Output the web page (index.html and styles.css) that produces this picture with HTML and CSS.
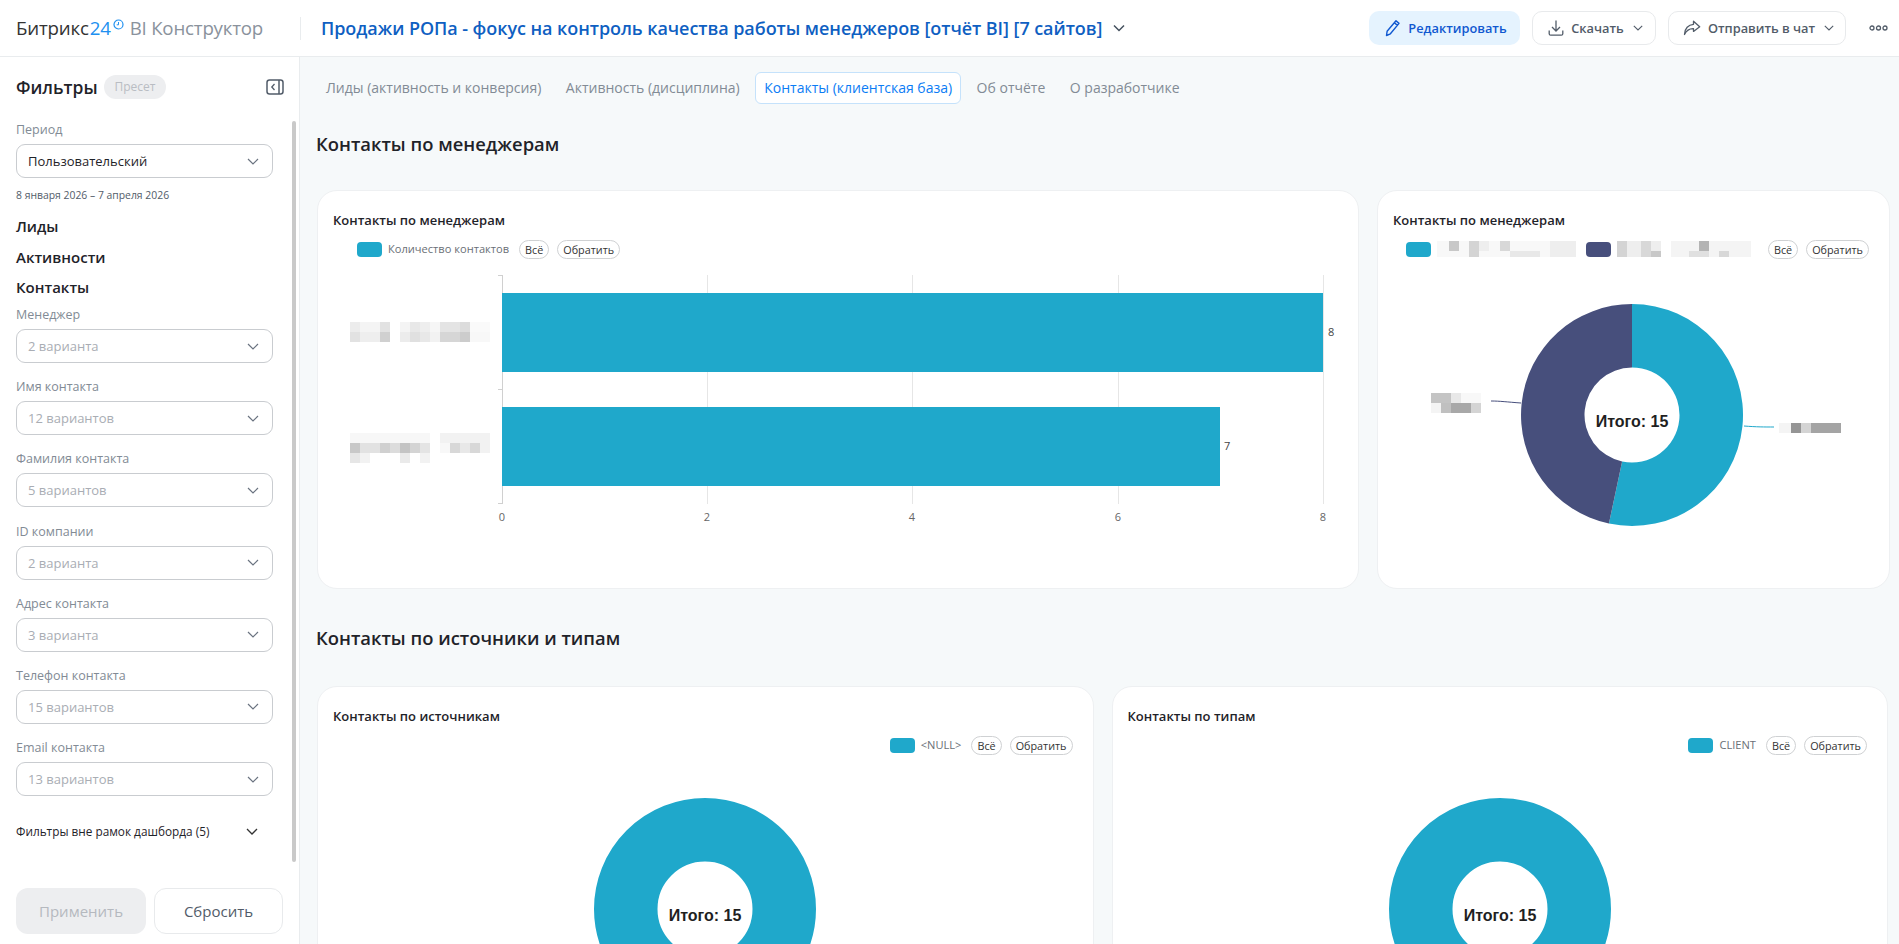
FILE: index.html
```html
<!DOCTYPE html>
<html lang="ru">
<head>
<meta charset="utf-8">
<title>Продажи РОПа</title>
<link rel="stylesheet" href="styles.css">
</head>
<body>
<div class="app">
  <header class="topbar">
    <div class="logo"><span class="logo-dark">Битрикс</span><span class="logo-blue">24</span><svg class="logo-clock" width="11" height="11" viewBox="0 0 11 11"><circle cx="5.500" cy="5.500" r="4.500" fill="none" stroke="#2090f0" stroke-width="1.200"/><path d="M5.500 3v2.800H3.700" fill="none" stroke="#2090f0" stroke-width="1"/></svg><span class="logo-gray">BI Конструктор</span></div>
    <div class="report-title"><h1>Продажи РОПа - фокус на контроль качества работы менеджеров [отчёт BI] [7 сайтов]</h1>
      <svg class="report-chev" width="12" height="8" viewBox="0 0 12 8"><path d="M1 1.500l5 5 5-5" fill="none" stroke="#44505e" stroke-width="1.500"/></svg></div>
    <div class="actions">
      <button class="btn btn-edit"><svg width="16" height="18" viewBox="0 0 16 18"><path d="M11 1.800l3 2.600-8.600 10.400-3.900 1.700.6-4.200zM9.400 3.800l3 2.600" fill="none" stroke="#1058d0" stroke-width="1.400" stroke-linejoin="round"/></svg>Редактировать</button>
      <button class="btn btn-line btn-dl"><svg width="16" height="18" viewBox="0 0 16 18"><path d="M8 1.500v10M4 8l4 4 4-4M1.200 11.500v3.200c0 .9.6 1.500 1.500 1.500h10.600c.9 0 1.500-.6 1.500-1.500v-3.200" fill="none" stroke="#525c69" stroke-width="1.300"/></svg>Скачать<svg class="btn-chev" width="10" height="6" viewBox="0 0 10 6"><path d="M.8.8L5 5 9.200.8" fill="none" stroke="#525c69" stroke-width="1.100"/></svg></button>
      <button class="btn btn-line btn-send"><svg width="18" height="16" viewBox="0 0 18 16"><path d="M10.500 1.200l6.200 5.600-6.200 4.600V8.600C6.500 8.400 3.400 10.600 1.500 14.500 1.600 8.500 5.500 4.700 10.500 4.300z" fill="none" stroke="#525c69" stroke-width="1.300" stroke-linejoin="round"/></svg>Отправить в чат<svg class="btn-chev" width="10" height="6" viewBox="0 0 10 6"><path d="M.8.8L5 5 9.200.8" fill="none" stroke="#525c69" stroke-width="1.100"/></svg></button>
      <svg class="more" width="19" height="6" viewBox="0 0 19 6"><circle cx="3" cy="3" r="2" fill="none" stroke="#525c69" stroke-width="1.300"/><circle cx="9.500" cy="3" r="2" fill="none" stroke="#525c69" stroke-width="1.300"/><circle cx="16" cy="3" r="2" fill="none" stroke="#525c69" stroke-width="1.300"/></svg>
    </div>
  </header>
  <div class="workspace">
    <aside class="sidebar">
      <div class="scroll-thumb"></div>
      <div class="filter-head">
        <h2>Фильтры</h2><span class="preset">Пресет</span>
        <svg class="collapse" width="18" height="16" viewBox="0 0 18 16"><rect x="1" y="1" width="16" height="14" rx="2.500" fill="none" stroke="#525c69" stroke-width="1.500"/><path d="M13 1v14" stroke="#525c69" stroke-width="1.500"/><path d="M8.500 5L5.800 8l2.700 3" fill="none" stroke="#525c69" stroke-width="1.300"/></svg>
      </div>
      <div class="filter-body">
        <div class="period-label">Период</div>
        <div class="select select-filled">Пользовательский<svg width="12" height="7" viewBox="0 0 12 7"><path d="M1 1l5 5 5-5" fill="none" stroke="#6a7380" stroke-width="1.200"/></svg></div>
        <div class="date-range">8 января 2026 – 7 апреля 2026</div>
        <h3 class="group">Лиды</h3>
        <h3 class="group">Активности</h3>
        <h3 class="group">Контакты</h3>
        <div class="field"><label>Менеджер</label><div class="select">2 варианта<svg width="12" height="7" viewBox="0 0 12 7"><path d="M1 1l5 5 5-5" fill="none" stroke="#6a7380" stroke-width="1.200"/></svg></div></div>
        <div class="field"><label>Имя контакта</label><div class="select">12 вариантов<svg width="12" height="7" viewBox="0 0 12 7"><path d="M1 1l5 5 5-5" fill="none" stroke="#6a7380" stroke-width="1.200"/></svg></div></div>
        <div class="field"><label>Фамилия контакта</label><div class="select">5 вариантов<svg width="12" height="7" viewBox="0 0 12 7"><path d="M1 1l5 5 5-5" fill="none" stroke="#6a7380" stroke-width="1.200"/></svg></div></div>
        <div class="field"><label>ID компании</label><div class="select">2 варианта<svg width="12" height="7" viewBox="0 0 12 7"><path d="M1 1l5 5 5-5" fill="none" stroke="#6a7380" stroke-width="1.200"/></svg></div></div>
        <div class="field"><label>Адрес контакта</label><div class="select">3 варианта<svg width="12" height="7" viewBox="0 0 12 7"><path d="M1 1l5 5 5-5" fill="none" stroke="#6a7380" stroke-width="1.200"/></svg></div></div>
        <div class="field"><label>Телефон контакта</label><div class="select">15 вариантов<svg width="12" height="7" viewBox="0 0 12 7"><path d="M1 1l5 5 5-5" fill="none" stroke="#6a7380" stroke-width="1.200"/></svg></div></div>
        <div class="field"><label>Email контакта</label><div class="select">13 вариантов<svg width="12" height="7" viewBox="0 0 12 7"><path d="M1 1l5 5 5-5" fill="none" stroke="#6a7380" stroke-width="1.200"/></svg></div></div>
        <div class="outside">Фильтры вне рамок дашборда (5)<svg width="12" height="7" viewBox="0 0 12 7"><path d="M1 1l5 5 5-5" fill="none" stroke="#333" stroke-width="1.300"/></svg></div>
      </div>
      <div class="filter-foot"><button class="apply">Применить</button><button class="reset">Сбросить</button></div>
    </aside>
    <main class="content">
      <nav class="tabs">
        <span class="tab">Лиды (активность и конверсия)</span>
        <span class="tab">Активность (дисциплина)</span>
        <span class="tab tab-active">Контакты (клиентская база)</span>
        <span class="tab">Об отчёте</span>
        <span class="tab">О разработчике</span>
      </nav>
      <h2 class="section-title first">Контакты по менеджерам</h2>
      <section class="row row-managers">
        <article class="card">
          <h3 class="card-title">Контакты по менеджерам</h3>
          <div class="legend legend-left"><i class="swatch"></i><span class="legend-text">Количество контактов</span><span class="pill">Всё</span><span class="pill">Обратить</span></div>
          <svg class="chart" width="1011" height="270" viewBox="0 0 1011 270">
            <g stroke="#e6e6e6"><path d="M375.500 10V239M580.500 10V239M786.500 10V239M991.500 10V239"/></g>
            <path d="M170.500 10V239M166 10.500h4M166 124.500h4M166 238.500h4" stroke="#d0d0d0" fill="none"/>
            <rect x="170" y="28" width="821" height="79" fill="#1fa8cb"/>
            <rect x="170" y="142" width="718" height="79" fill="#1fa8cb"/>
            <text class="val" x="996" y="71">8</text><text class="val" x="892" y="185">7</text>
            <text class="tick" x="170" y="256">0</text><text class="tick" x="375" y="256">2</text><text class="tick" x="580" y="256">4</text><text class="tick" x="786" y="256">6</text><text class="tick" x="991" y="256">8</text>
            <g transform="translate(18,57)">
              <rect width="10" height="10" fill="#ececec"/><rect x="10" width="20" height="10" fill="#f4f4f4"/><rect x="30" width="10" height="10" fill="#e2e2e2"/><rect x="50" width="10" height="10" fill="#f4f4f4"/><rect x="60" width="10" height="10" fill="#e8e8e8"/><rect x="70" width="10" height="10" fill="#eee"/><rect x="80" width="10" height="10" fill="#f6f6f6"/><rect x="90" width="20" height="10" fill="#e4e4e4"/><rect x="110" width="10" height="10" fill="#dcdcdc"/><rect x="120" width="20" height="10" fill="#fafafa"/>
              <rect y="10" width="10" height="10" fill="#e2e2e2"/><rect x="10" y="10" width="20" height="10" fill="#eee"/><rect x="30" y="10" width="10" height="10" fill="#d0d0d0"/><rect x="50" y="10" width="10" height="10" fill="#ececec"/><rect x="60" y="10" width="10" height="10" fill="#e0e0e0"/><rect x="70" y="10" width="10" height="10" fill="#e8e8e8"/><rect x="80" y="10" width="10" height="10" fill="#f2f2f2"/><rect x="90" y="10" width="20" height="10" fill="#d6d6d6"/><rect x="110" y="10" width="10" height="10" fill="#ccc"/><rect x="120" y="10" width="20" height="10" fill="#f8f8f8"/>
            </g>
            <g transform="translate(18,168)">
              <rect width="80" height="10" fill="#f7f7f7"/><rect x="90" width="50" height="10" fill="#f2f2f2"/>
              <rect y="10" width="10" height="10" fill="#c8c8c8"/><rect x="10" y="10" width="20" height="10" fill="#e2e2e2"/><rect x="30" y="10" width="10" height="10" fill="#d0d0d0"/><rect x="40" y="10" width="10" height="10" fill="#dcdcdc"/><rect x="50" y="10" width="10" height="10" fill="#c4c4c4"/><rect x="60" y="10" width="10" height="10" fill="#d4d4d4"/><rect x="70" y="10" width="10" height="10" fill="#e4e4e4"/><rect x="90" y="10" width="10" height="10" fill="#f8f8f8"/><rect x="100" y="10" width="10" height="10" fill="#d8d8d8"/><rect x="110" y="10" width="10" height="10" fill="#e8e8e8"/><rect x="120" y="10" width="10" height="10" fill="#d8d8d8"/><rect x="130" y="10" width="10" height="10" fill="#f2f2f2"/>
              <rect y="20" width="10" height="10" fill="#e6e6e6"/><rect x="10" y="20" width="10" height="10" fill="#f2f2f2"/><rect x="50" y="20" width="10" height="10" fill="#eaeaea"/><rect x="70" y="20" width="10" height="10" fill="#f2f2f2"/>
            </g>
          </svg>
        </article>
        <article class="card">
          <h3 class="card-title">Контакты по менеджерам</h3>
          <div class="legend">
            <i class="swatch"></i>
            <svg class="blur-legend" width="139" height="16" viewBox="0 0 139 16"><rect width="139" height="16" fill="#f8f8f8"/><rect x="12" width="10" height="10" fill="#c8c8c8"/><rect x="32" width="10" height="16" fill="#d4d4d4"/><rect x="42" width="10" height="10" fill="#eee"/><rect x="63" width="10" height="10" fill="#d8d8d8"/><rect x="73" y="10" width="30" height="6" fill="#e8e8e8"/><rect x="113" width="26" height="16" fill="#eee"/></svg>
            <i class="swatch swatch-navy"></i>
            <svg class="blur-legend" width="134" height="16" viewBox="0 0 134 16"><rect width="44" height="16" fill="#eee"/><rect width="10" height="16" fill="#d4d4d4"/><rect x="24" width="10" height="16" fill="#d8d8d8"/><rect x="34" y="10" width="10" height="6" fill="#c8c8c8"/><rect x="54" width="80" height="16" fill="#f4f4f4"/><rect x="82" width="10" height="10" fill="#b4b4b4"/><rect x="72" y="10" width="20" height="6" fill="#e0e0e0"/><rect x="102" y="10" width="10" height="6" fill="#d8d8d8"/></svg>
            <span class="pill">Всё</span><span class="pill">Обратить</span>
          </div>
          <svg class="chart" width="482" height="270" viewBox="0 0 482 270">
            <path d="M240 39A111 111 0 1 1 216.920 258.570L230.120 196.460A47.500 47.500 0 1 0 240 102.500Z" fill="#1fa8cb"/>
            <path d="M240 39A111 111 0 0 0 216.920 258.570L230.120 196.460A47.500 47.500 0 0 1 240 102.500Z" fill="#474f7c"/>
            <path d="M129 138C115 137 108 136 99 136" fill="none" stroke="#474f7c"/>
            <path d="M352 161C365 162 372 162 382 162" fill="none" stroke="#1fa8cb"/>
            <text class="total" x="240" y="162">Итого: 15</text>
            <g transform="translate(39,128)"><rect width="20" height="10" fill="#c4c4c4"/><rect x="20" width="10" height="10" fill="#e8e8e8"/><rect x="30" width="20" height="10" fill="#f8f8f8"/><rect y="10" width="10" height="10" fill="#f4f4f4"/><rect x="10" y="10" width="10" height="10" fill="#c0c0c0"/><rect x="20" y="10" width="20" height="10" fill="#a8a8a8"/><rect x="40" y="10" width="10" height="10" fill="#d4d4d4"/></g>
            <g transform="translate(387,158)"><rect width="12" height="10" fill="#f4f4f4"/><rect x="12" width="10" height="10" fill="#959595"/><rect x="22" width="10" height="10" fill="#d4d4d4"/><rect x="32" width="30" height="10" fill="#a4a4a4"/></g>
          </svg>
        </article>
      </section>
      <h2 class="section-title">Контакты по источники и типам</h2>
      <section class="row row-sources">
        <article class="card">
          <h3 class="card-title">Контакты по источникам</h3>
          <div class="legend"><i class="swatch"></i><span class="legend-text">&lt;NULL&gt;</span><span class="pill">Всё</span><span class="pill">Обратить</span></div>
          <svg class="ring" width="400" height="300" viewBox="0 0 400 300"><circle cx="200" cy="145" r="79.250" fill="none" stroke="#1fa8cb" stroke-width="63.500"/><text class="total" x="200" y="157">Итого: 15</text></svg>
        </article>
        <article class="card">
          <h3 class="card-title">Контакты по типам</h3>
          <div class="legend"><i class="swatch"></i><span class="legend-text">CLIENT</span><span class="pill">Всё</span><span class="pill">Обратить</span></div>
          <svg class="ring" width="400" height="300" viewBox="0 0 400 300"><circle cx="200" cy="145" r="79.250" fill="none" stroke="#1fa8cb" stroke-width="63.500"/><text class="total" x="200" y="157">Итого: 15</text></svg>
        </article>
      </section>
    </main>
  </div>
</div>
</body>
</html>
```
FILE: styles.css
```css
* { box-sizing: border-box; }
html, body { margin: 0; height: 100%; overflow: hidden; }
body { font-family: "Open Sans", "Noto Sans", sans-serif; color: #1f2329; background: #fff; }
h1, h2, h3 { margin: 0; }
.app { height: 944px; display: flex; flex-direction: column; }

.topbar { height: 57px; flex: none; display: flex; align-items: center; border-bottom: 1px solid #e9ecee; background: #fff; padding-right: 11px; }
.logo { width: 300px; padding-left: 16px; display: flex; align-items: center; font-size: 18.700px; line-height: 24px; letter-spacing: -.2px; }
.logo-dark { color: #333; }
.logo-blue { color: #2090f0; margin-left: 1px; }
.logo-clock { align-self: flex-start; margin: 3px 0 0 2px; }
.logo-gray { color: #8a929c; margin-left: 6px; }
.report-title { flex: 1; display: flex; align-items: center; gap: 11px; height: 23px; padding-left: 20px; border-left: 1px solid #e9ecee; }
.report-title h1 { font-size: 18px; font-weight: 600; color: #0f5fc2; letter-spacing: -.06px; white-space: nowrap; }
.actions { display: flex; align-items: center; gap: 12px; }
.btn { height: 34px; border-radius: 10px; font: 600 12.800px "Open Sans", "Noto Sans", sans-serif; display: flex; align-items: center; justify-content: center; gap: 7px; padding: 0 0 0 3px; white-space: nowrap; }
.btn-chev { margin-left: 2px; }
.btn-edit { width: 151px; border: 0; background: #e5f3fe; color: #1058d0; }
.btn-line { background: #fff; border: 1px solid #e8eaec; color: #525c69; }
.btn-dl { width: 124px; }
.btn-send { width: 178px; }
.more { margin: 0 0 0 11px; }

.workspace { flex: 1; min-height: 0; display: flex; }
.sidebar { position: relative; width: 300px; flex: none; background: #fff; border-right: 1px solid #e9ecee; display: flex; flex-direction: column; padding: 18px 16px 10px; }
.scroll-thumb { position: absolute; left: 292px; top: 64px; width: 4px; height: 741px; border-radius: 2px; background: #c9c9c9; }
.filter-head { height: 24px; display: flex; align-items: center; }
.filter-head h2 { width: 88px; font-size: 17.500px; font-weight: 600; line-height: 24px; color: #1f2329; }
.preset { width: 62px; height: 24px; border-radius: 12px; background: #edeef0; color: #b9bdc3; font-size: 12px; line-height: 24px; text-align: center; }
.collapse { margin-left: auto; margin-right: -1px; }
.filter-body { flex: 1; padding-top: 22px; }
.period-label, .field label { display: block; color: #828b95; font-size: 12.500px; line-height: 18px; }
.select { width: 257px; height: 34px; margin-top: 5px; border: 1px solid #c9ccd0; border-radius: 9px; display: flex; align-items: center; justify-content: space-between; padding: 0 13px 0 11px; color: #a9adb4; font-size: 13px; }
.select-filled { color: #1f2329; }
.date-range { margin-top: 9px; color: #525c69; font-size: 10.400px; line-height: 16px; }
.group { font-size: 15px; font-weight: 600; line-height: 20px; color: #1f2329; margin-top: 11px; }
.group:nth-of-type(1) { margin-top: 13px; }
.group:nth-of-type(3) { margin-top: 10px; }
.field { height: 72.200px; padding-top: 9px; }
.outside { width: 242px; margin-top: 20px; display: flex; justify-content: space-between; align-items: center; font-size: 11.800px; line-height: 18px; color: #1f2329; }
.filter-foot { display: flex; gap: 8px; }
.apply, .reset { height: 46px; border-radius: 12px; font: 500 15px "Open Sans", "Noto Sans", sans-serif; }
.apply { width: 130px; background: #edeef0; border: 0; color: #b5b9bf; }
.reset { width: 129px; background: #fff; border: 1px solid #e8eaec; color: #525c69; }

.content { flex: 1; min-width: 0; background: #f6f9fa; padding: 15px 11px 0 17px; overflow: hidden; }
.tabs { display: flex; gap: 6.500px; height: 32px; margin-bottom: 1px; }
.tab { padding: 0 8px; line-height: 30px; font-size: 14px; color: #828b95; border: 1px solid transparent; border-radius: 6px; white-space: nowrap; }
.tab-active { color: #0b7cf5; background: #fff; border-color: #c5e2fb; }
.section-title { font-size: 18.400px; font-weight: 600; line-height: 24px; color: #1f2329; margin: 37px 0 36px -1px; }
.section-title.first { margin: 28px 0 34px -1px; }
.row { display: grid; gap: 18px; }
.row-managers { grid-template-columns: 1041fr 512fr; }
.row-sources { grid-template-columns: 1fr 1fr; }
.card { height: 399px; background: #fff; border: 1px solid #eef0f2; border-radius: 20px; padding: 19px 15px 0; }
.card-title { font-size: 13px; font-weight: 600; line-height: 20px; color: #1f2329; }
.legend { height: 20px; margin-top: 9px; display: flex; align-items: center; justify-content: flex-end; padding-right: 5px; }
.legend-left { justify-content: flex-start; padding: 0 0 0 24px; }
.swatch { width: 25px; height: 15px; border-radius: 4px; background: #1fa8cb; flex: none; }
.swatch-navy { background: #474f7c; margin-left: 10px; }
.legend-text { margin-left: 6px; font-size: 11.100px; line-height: 20px; color: #6a6f76; white-space: nowrap; }
.blur-legend { margin-left: 6px; }
.pill { height: 19px; margin-left: 8px; padding: 0 5px; border: 1px solid #cfd1d3; border-radius: 10px; font-size: 10.800px; line-height: 17px; color: #333; white-space: nowrap; }
.legend-text + .pill { margin-left: 10px; }
.blur-legend + .pill { margin-left: 17px; }
.chart { display: block; margin: 6px 0 0 -1px; }
.ring { display: block; margin: 9px auto 0; }
.val, .tick { font: 11px "Open Sans", "Noto Sans", sans-serif; fill: #444; }
.tick { text-anchor: middle; fill: #666; }
.total { font: 700 16px "Liberation Sans", Arial, sans-serif; fill: #1f1f1f; text-anchor: middle; }
```
